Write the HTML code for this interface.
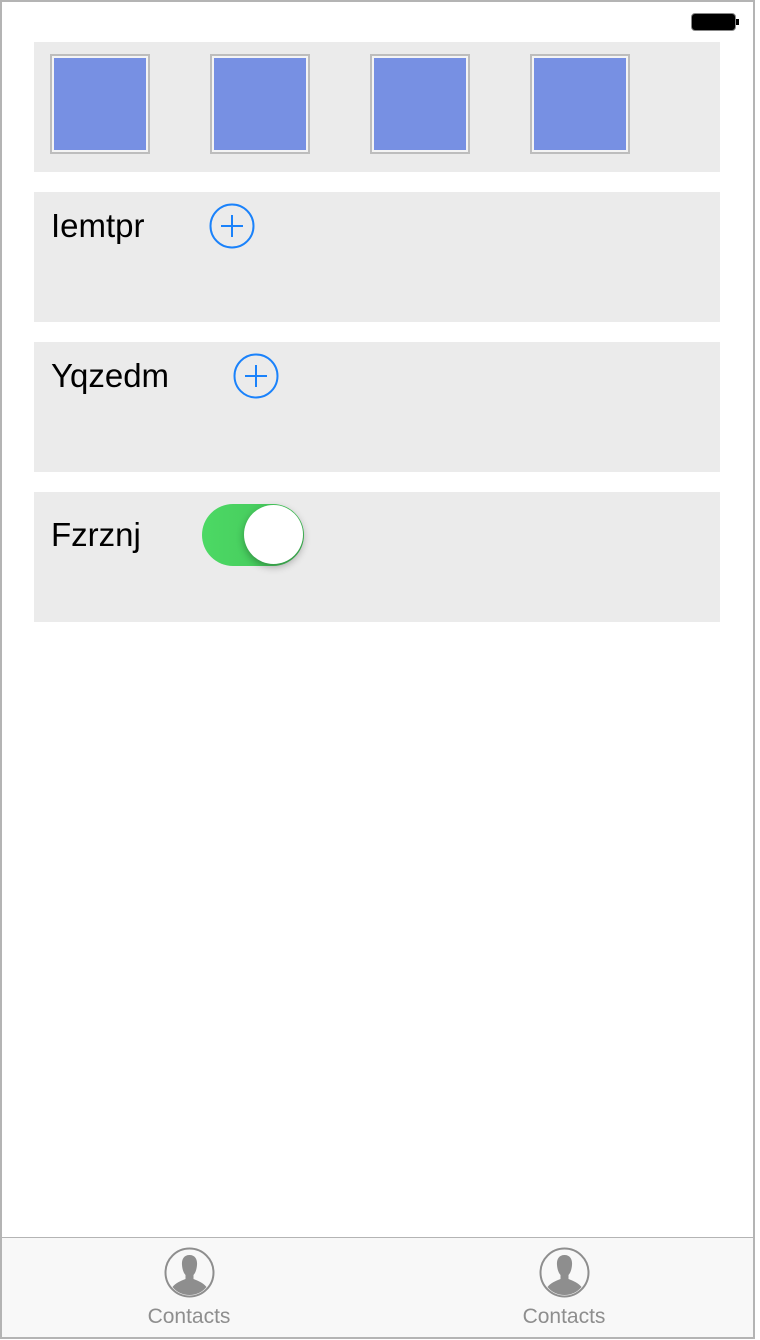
<!DOCTYPE html>
<html><head><meta charset="utf-8"><style>
*{margin:0;padding:0;box-sizing:border-box}
body{width:760px;height:1340px;background:#fff;position:relative;overflow:hidden;font-family:"Liberation Sans",sans-serif}
.frame{position:absolute;left:0;top:0;width:755px;height:1339px;border:2px solid #b4b4b4}
.card{position:absolute;left:34px;width:686px;height:130px;background:#ebebeb}
.sq{position:absolute;top:54px;width:100px;height:100px;border:2px solid #bdbdbd;background:#f4f4f4;padding:2px}
.sq div{width:100%;height:100%;background:#7790e3}
.lbl{position:absolute;left:51px;font-size:33px;color:#000}
.plus{position:absolute}
.tab{position:absolute;left:2px;top:1237px;width:751px;height:100px;background:#f8f8f8;border-top:1px solid #b4b4b4}
.tl{position:absolute;top:1305px;font-size:21px;color:#8e8e8e;width:120px;text-align:center}
</style></head><body>
<svg style="position:absolute;left:690px;top:12px" width="50" height="22"><rect x="1.5" y="1.5" width="44" height="17" rx="3.5" fill="#000" stroke="#888" stroke-width="1"/><rect x="46" y="7" width="3" height="6" fill="#000"/></svg>
<div class="card" style="top:42px"></div>
<div class="sq" style="left:50px"><div></div></div>
<div class="sq" style="left:210px"><div></div></div>
<div class="sq" style="left:370px"><div></div></div>
<div class="sq" style="left:530px"><div></div></div>
<div class="card" style="top:192px"></div>
<div class="lbl" style="top:207px">Iemtpr</div>
<svg class="plus" style="left:209px;top:203px" width="46" height="46"><circle cx="23" cy="23" r="21.5" fill="none" stroke="#1a82fb" stroke-width="2"/><path d="M23 12v22M12 23h22" stroke="#1a82fb" stroke-width="2"/></svg>
<div class="card" style="top:342px"></div>
<div class="lbl" style="top:357px">Yqzedm</div>
<svg class="plus" style="left:233px;top:353px" width="46" height="46"><circle cx="23" cy="23" r="21.5" fill="none" stroke="#1a82fb" stroke-width="2"/><path d="M23 12v22M12 23h22" stroke="#1a82fb" stroke-width="2"/></svg>
<div class="card" style="top:492px"></div>
<div class="lbl" style="top:516px">Fzrznj</div>
<div style="position:absolute;left:202px;top:504px;width:102px;height:62px;border-radius:31px;background:linear-gradient(90deg,#4cd964,#44c45a)"></div>
<div style="position:absolute;left:244px;top:505px;width:59px;height:59px;border-radius:50%;background:#fff;box-shadow:0 3px 8px rgba(0,0,0,.3)"></div>
<div class="tab"></div>
<svg style="position:absolute;left:164px;top:1247px" width="51" height="51"><circle cx="25.5" cy="25.5" r="24" fill="none" stroke="#8e8e8e" stroke-width="2"/><path d="M25.5 8c-6 0-8 5-7.5 10 .3 4 1.5 8 3.5 10l0 4c-5 2-10 4-13 8 4 5 10 8 17 8s13-3 17-8c-3-4-8-6-13-8l0-4c2-2 3.2-6 3.5-10 .5-5-1.5-10-7.5-10z" fill="#8e8e8e"/></svg>
<svg style="position:absolute;left:539px;top:1247px" width="51" height="51"><circle cx="25.5" cy="25.5" r="24" fill="none" stroke="#8e8e8e" stroke-width="2"/><path d="M25.5 8c-6 0-8 5-7.5 10 .3 4 1.5 8 3.5 10l0 4c-5 2-10 4-13 8 4 5 10 8 17 8s13-3 17-8c-3-4-8-6-13-8l0-4c2-2 3.2-6 3.5-10 .5-5-1.5-10-7.5-10z" fill="#8e8e8e"/></svg>
<div class="tl" style="left:129px">Contacts</div>
<div class="tl" style="left:504px">Contacts</div>
<div class="frame"></div>
</body></html>
